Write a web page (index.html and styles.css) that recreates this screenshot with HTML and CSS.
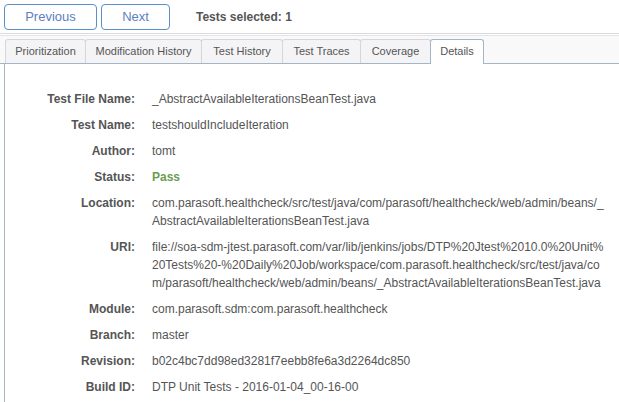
FILE: index.html
```html
<!DOCTYPE html>
<html>
<head>
<meta charset="utf-8">
<link rel="stylesheet" href="styles.css">
</head>
<body>
<div class="toolbar">
  <button class="nav-btn prev">Previous</button>
  <button class="nav-btn next">Next</button>
  <span class="selected">Tests selected: 1</span>
</div>
<div class="tabstrip">
  <div class="tab t1">Prioritization</div>
  <div class="tab t2">Modification History</div>
  <div class="tab t3">Test History</div>
  <div class="tab t4">Test Traces</div>
  <div class="tab t5">Coverage</div>
  <div class="tab t6 active">Details</div>
</div>
<div class="panel">
  <div class="details">
    <div class="label">Test File Name:</div><div class="value">_AbstractAvailableIterationsBeanTest.java</div>
    <div class="label">Test Name:</div><div class="value">testshouldIncludeIteration</div>
    <div class="label">Author:</div><div class="value">tomt</div>
    <div class="label">Status:</div><div class="value pass">Pass</div>
    <div class="label">Location:</div><div class="value">com.parasoft.healthcheck/src/test/java/com/parasoft/healthcheck/web/admin/beans/_AbstractAvailableIterationsBeanTest.java</div>
    <div class="label">URI:</div><div class="value">file://soa-sdm-jtest.parasoft.com/var/lib/jenkins/jobs/DTP%20Jtest%2010.0%20Unit%20Tests%20-%20Daily%20Job/workspace/com.parasoft.healthcheck/src/test/java/com/parasoft/healthcheck/web/admin/beans/_AbstractAvailableIterationsBeanTest.java</div>
    <div class="label">Module:</div><div class="value">com.parasoft.sdm:com.parasoft.healthcheck</div>
    <div class="label">Branch:</div><div class="value">master</div>
    <div class="label">Revision:</div><div class="value">b02c4bc7dd98ed3281f7eebb8fe6a3d2264dc850</div>
    <div class="label">Build ID:</div><div class="value">DTP Unit Tests - 2016-01-04_00-16-00</div>
  </div>
</div>
</body>
</html>
```
FILE: styles.css
```css
html, body {
  margin: 0;
  padding: 0;
  background: #fff;
  font-family: "Liberation Sans", Arial, sans-serif;
  color: #555;
  overflow: hidden;
}
.toolbar {
  display: flex;
  align-items: center;
  height: 34px;
  padding: 0 0 0 4px;
  box-sizing: border-box;
  border-bottom: 1px solid #dadade;
}
.nav-btn {
  height: 26px;
  box-sizing: border-box;
  background: #fff;
  border: 1px solid #5a8fc8;
  border-radius: 4px;
  color: #5d7fbf;
  font-family: "Liberation Sans", Arial, sans-serif;
  font-size: 13px;
  padding: 0;
  margin: 0;
}
.prev { width: 93px; }
.next { width: 69px; margin-left: 4px; }
.selected {
  margin-left: 26px;
  font-size: 12px;
  font-weight: bold;
  color: #555;
}
.tabstrip {
  display: flex;
  align-items: flex-end;
  height: 29px;
  margin-top: 1px;
  padding-left: 5px;
  box-sizing: border-box;
  border-top: 1px solid #e4e4e8;
  border-bottom: 1px solid #a3b5c7;
  background: #f9f9f9;
}
.tab {
  height: 24px;
  box-sizing: border-box;
  border: 1px solid #d6d6da;
  border-bottom: none;
  border-radius: 3px 3px 0 0;
  background: #f4f4f6;
  font-size: 11px;
  line-height: 23px;
  text-align: center;
  color: #555;
  margin-right: -1px;
}
.t1 { width: 81px; }
.t2 { width: 117px; }
.t3 { width: 82px; }
.t4 { width: 79px; }
.t5 { width: 71px; }
.t6 { width: 54px; }
.tab.active {
  background: #fff;
  border-color: #a3b5c7;
  height: 25px;
  margin-bottom: -1px;
  position: relative;
}
.panel {
  margin-left: 4px;
  border-left: 1px solid #a3b5c7;
  height: 340px;
  padding-top: 22px;
  box-sizing: border-box;
}
.details {
  display: grid;
  grid-template-columns: 130px 1fr;
  column-gap: 17px;
  padding-right: 12px;
  font-size: 12px;
  line-height: 18px;
}
.label {
  text-align: right;
  font-weight: bold;
  padding: 4px 0;
  color: #555;
}
.value {
  padding: 4px 0;
  word-break: break-all;
  color: #555;
}
.value.pass {
  color: #6a9d4f;
  font-weight: bold;
}
```
